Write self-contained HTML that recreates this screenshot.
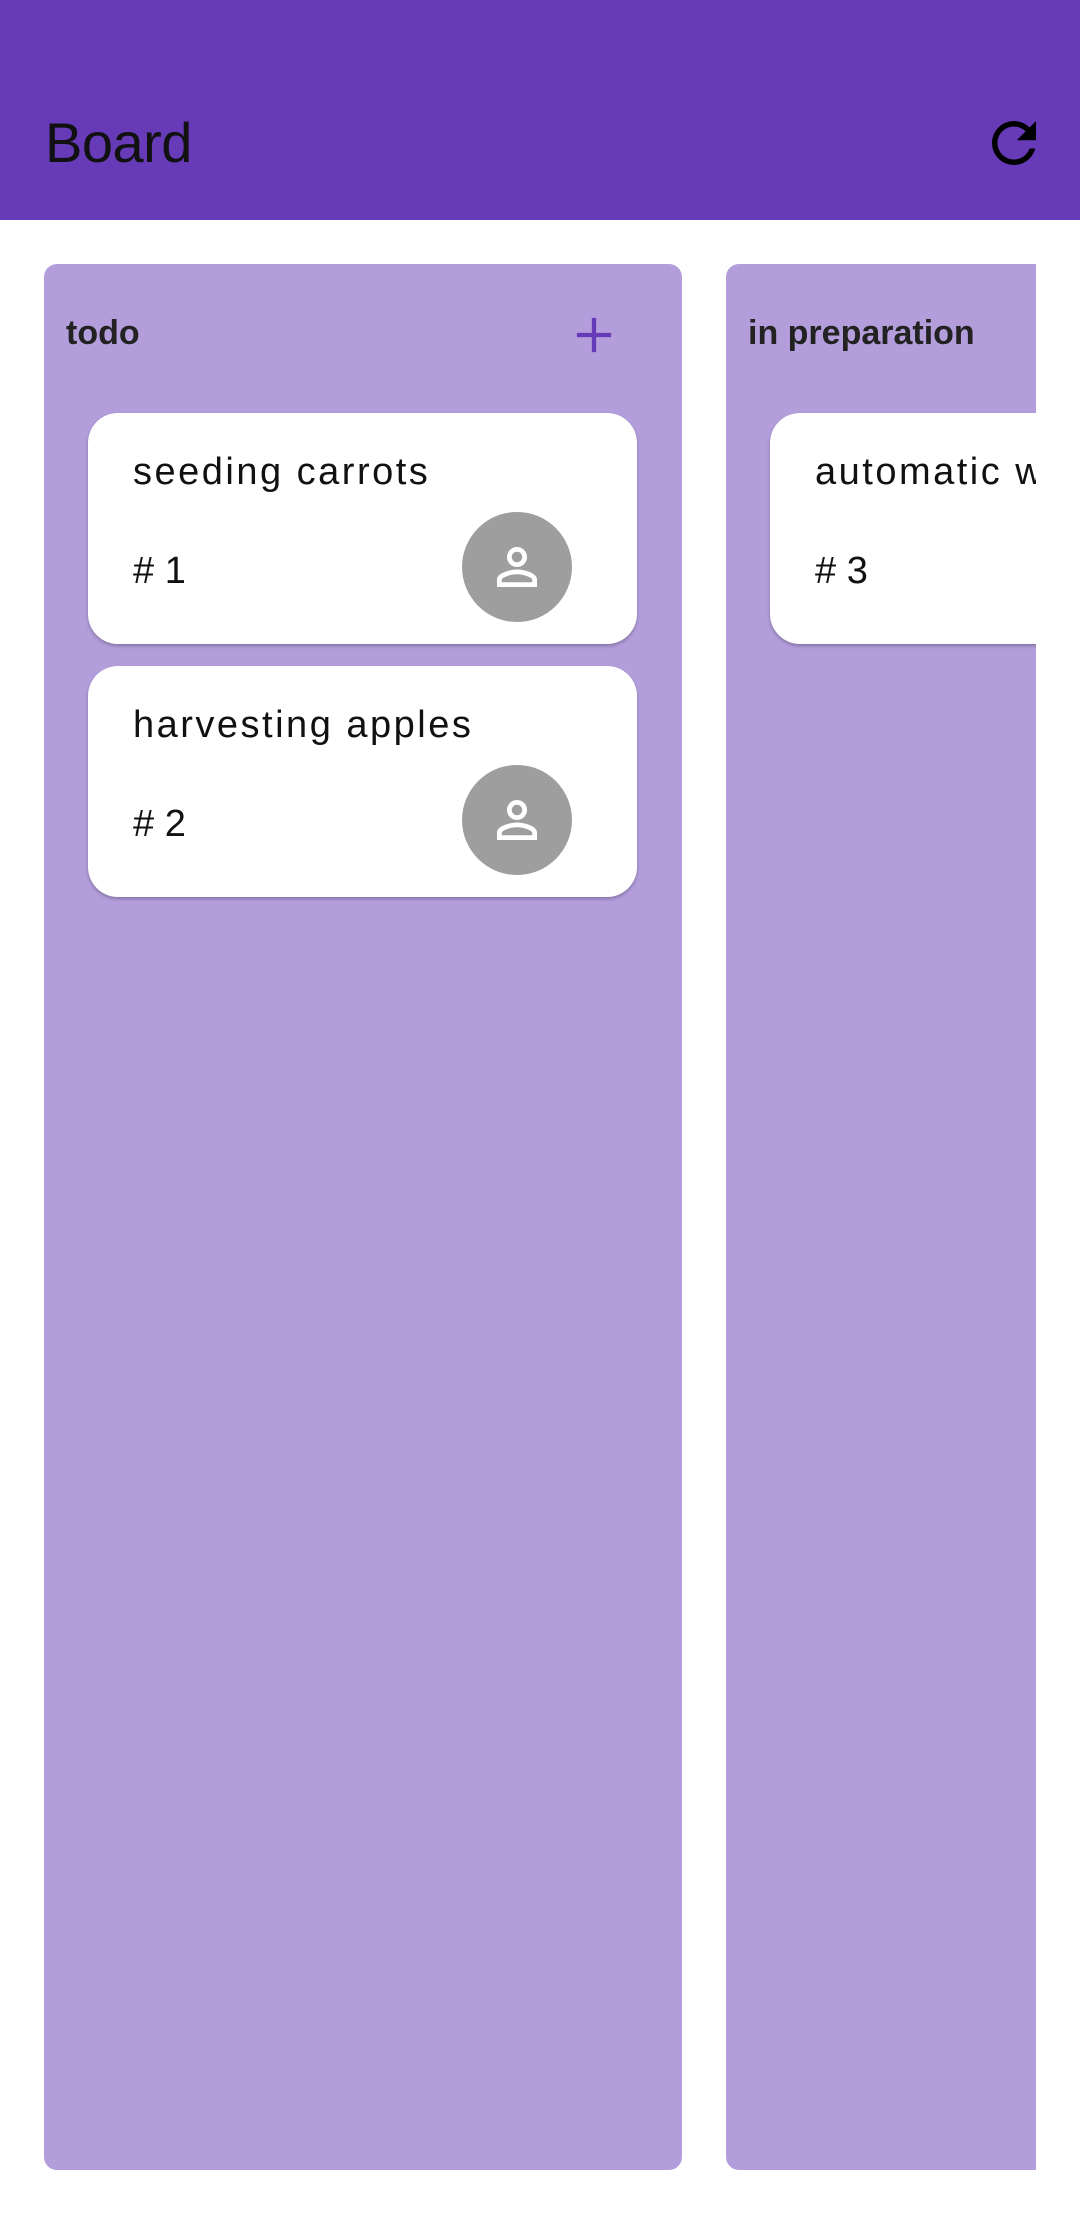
<!DOCTYPE html>
<html><head><meta charset="utf-8"><style>
*{margin:0;padding:0;box-sizing:border-box}
html,body{width:1080px;height:2214px;background:#fff;overflow:hidden;font-family:"Liberation Sans",sans-serif}
.bar{position:absolute;left:0;top:0;width:1080px;height:220px;background:#673ab7}
.title{position:absolute;left:45px;top:110px;font-size:56px;color:#111;letter-spacing:-0.5px}
.refresh{position:absolute;left:981px;top:110px;width:66px;height:66px}
.viewport{position:absolute;left:0;top:220px;width:1036px;height:1994px;overflow:hidden}
.col{position:absolute;top:44px;height:1906px;background:#b39ddb;border-radius:13px}
.colt{position:absolute;top:50px;font-size:34px;font-weight:bold;color:#222}
.card{position:absolute;background:#fff;border-radius:30px;box-shadow:0 2px 3px rgba(0,0,0,.25)}
.ct{position:absolute;left:45px;top:38px;font-size:38px;color:#111;letter-spacing:2.5px;white-space:nowrap}
.cn{position:absolute;left:45px;top:137px;font-size:38px;color:#111}
.av{position:absolute;left:374px;top:99px;width:110px;height:110px;border-radius:50%;background:#9e9e9e}
.av svg{position:absolute;left:25px;top:25px}
</style></head><body>
<div class="bar"></div>
<div class="title">Board</div>
<svg class="refresh" viewBox="0 0 24 24"><path fill="#000" d="M17.65 6.35C16.2 4.9 14.21 4 12 4c-4.42 0-7.99 3.58-7.99 8s3.57 8 7.99 8c3.730 0 6.84-2.55 7.73-6h-2.08c-.82 2.33-3.04 4-5.65 4-3.31 0-6-2.69-6-6s2.69-6 6-6c1.66 0 3.14.69 4.22 1.78L13 11h7V4l-2.35 2.35z"/></svg>
<div class="viewport">
<div class="col" style="left:44px;width:638px">
  <div class="colt" style="left:22px">todo</div>
  <svg style="position:absolute;left:531px;top:52px" width="38" height="38" viewBox="0 0 40 40"><path d="M20 2V38M2 20H38" stroke="#673ab7" stroke-width="4.5"/></svg>
  <div class="card" style="left:44px;top:149px;width:549px;height:231px">
    <div class="ct">seeding carrots</div><div class="cn"># 1</div>
    <div class="av"><svg width="60" height="60" viewBox="0 0 24 24"><path fill="#fff" d="M12 5.9c1.16 0 2.1.94 2.1 2.1s-.94 2.1-2.1 2.1S9.9 9.160 9.9 8s.94-2.1 2.1-2.1m0 9c2.97 0 6.1 1.46 6.1 2.1v1.1H5.9V17c0-.64 3.13-2.1 6.1-2.1M12 4C9.79 4 8 5.79 8 8s1.79 4 4 4 4-1.79 4-4-1.79-4-4-4zm0 9c-2.67 0-8 1.34-8 4v3h16v-3c0-2.66-5.33-4-8-4z"/></svg></div>
  </div>
  <div class="card" style="left:44px;top:402px;width:549px;height:231px">
    <div class="ct">harvesting apples</div><div class="cn"># 2</div>
    <div class="av"><svg width="60" height="60" viewBox="0 0 24 24"><path fill="#fff" d="M12 5.9c1.16 0 2.1.94 2.1 2.1s-.94 2.1-2.1 2.1S9.9 9.160 9.9 8s.94-2.1 2.1-2.1m0 9c2.97 0 6.1 1.46 6.1 2.1v1.1H5.9V17c0-.64 3.13-2.1 6.1-2.1M12 4C9.79 4 8 5.79 8 8s1.79 4 4 4 4-1.79 4-4-1.79-4-4-4zm0 9c-2.67 0-8 1.34-8 4v3h16v-3c0-2.66-5.33-4-8-4z"/></svg></div>
  </div>
</div>
<div class="col" style="left:726px;width:638px">
  <div class="colt" style="left:22px">in preparation</div>
  <div class="card" style="left:44px;top:149px;width:549px;height:231px">
    <div class="ct">automatic watering</div><div class="cn"># 3</div>
  </div>
</div>
</div>
</body></html>
